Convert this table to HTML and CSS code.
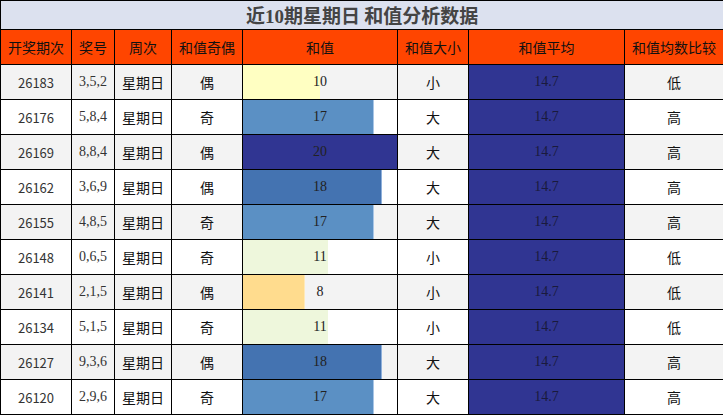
FILE: index.html
```html
<!DOCTYPE html>
<html lang="zh">
<head>
<meta charset="utf-8">
<title>近10期星期日 和值分析数据</title>
<link rel="stylesheet" href="styles.css">
</head>
<body>
<table class="sheet">
  <colgroup>
    <col class="c-issue"><col class="c-num"><col class="c-week"><col class="c-parity">
    <col class="c-sum"><col class="c-size"><col class="c-avg"><col class="c-cmp">
  </colgroup>
  <thead>
    <tr class="title-row"><th colspan="8" class="title">近<span class="digits">10</span>期星期日 和值分析数据</th></tr>
    <tr class="head-row">
      <th>开奖期次</th><th>奖号</th><th>周次</th><th>和值奇偶</th><th>和值</th><th>和值大小</th><th>和值平均</th><th>和值均数比较</th>
    </tr>
  </thead>
  <tbody>
    <tr class="odd"><td class="issue">26183</td><td class="serif">3,5,2</td><td>星期日</td><td>偶</td><td class="sum"><div class="sumbox"><div class="bar c10" style="width:50%"></div><span class="sumnum">10</span></div></td><td>小</td><td class="avg">14.7</td><td>低</td></tr>
    <tr><td class="issue">26176</td><td class="serif">5,8,4</td><td>星期日</td><td>奇</td><td class="sum"><div class="sumbox"><div class="bar c17" style="width:85%"></div><span class="sumnum">17</span></div></td><td>大</td><td class="avg">14.7</td><td>高</td></tr>
    <tr class="odd"><td class="issue">26169</td><td class="serif">8,8,4</td><td>星期日</td><td>偶</td><td class="sum"><div class="sumbox"><div class="bar c20" style="width:100%"></div><span class="sumnum">20</span></div></td><td>大</td><td class="avg">14.7</td><td>高</td></tr>
    <tr><td class="issue">26162</td><td class="serif">3,6,9</td><td>星期日</td><td>偶</td><td class="sum"><div class="sumbox"><div class="bar c18" style="width:90%"></div><span class="sumnum">18</span></div></td><td>大</td><td class="avg">14.7</td><td>高</td></tr>
    <tr class="odd"><td class="issue">26155</td><td class="serif">4,8,5</td><td>星期日</td><td>奇</td><td class="sum"><div class="sumbox"><div class="bar c17" style="width:85%"></div><span class="sumnum">17</span></div></td><td>大</td><td class="avg">14.7</td><td>高</td></tr>
    <tr><td class="issue">26148</td><td class="serif">0,6,5</td><td>星期日</td><td>奇</td><td class="sum"><div class="sumbox"><div class="bar c11" style="width:55%"></div><span class="sumnum">11</span></div></td><td>小</td><td class="avg">14.7</td><td>低</td></tr>
    <tr class="odd"><td class="issue">26141</td><td class="serif">2,1,5</td><td>星期日</td><td>偶</td><td class="sum"><div class="sumbox"><div class="bar c8" style="width:40%"></div><span class="sumnum">8</span></div></td><td>小</td><td class="avg">14.7</td><td>低</td></tr>
    <tr><td class="issue">26134</td><td class="serif">5,1,5</td><td>星期日</td><td>奇</td><td class="sum"><div class="sumbox"><div class="bar c11" style="width:55%"></div><span class="sumnum">11</span></div></td><td>小</td><td class="avg">14.7</td><td>低</td></tr>
    <tr class="odd"><td class="issue">26127</td><td class="serif">9,3,6</td><td>星期日</td><td>偶</td><td class="sum"><div class="sumbox"><div class="bar c18" style="width:90%"></div><span class="sumnum">18</span></div></td><td>大</td><td class="avg">14.7</td><td>高</td></tr>
    <tr><td class="issue">26120</td><td class="serif">2,9,6</td><td>星期日</td><td>奇</td><td class="sum"><div class="sumbox"><div class="bar c17" style="width:85%"></div><span class="sumnum">17</span></div></td><td>大</td><td class="avg">14.7</td><td>高</td></tr>
  </tbody>
</table>
</body>
</html>
```
FILE: styles.css
```css
html, body {
  margin: 0;
  padding: 0;
  background: #ffffff;
}

body {
  font-family: "Noto Sans CJK SC", "Noto Sans", sans-serif;
  font-size: 14px;
  color: #111;
}

.sheet {
  width: 723px;
  border-collapse: collapse;
  table-layout: fixed;
}

.c-issue { width: 71px; }
.c-num { width: 43px; }
.c-week { width: 57px; }
.c-parity { width: 71px; }
.c-sum { width: 155px; }
.c-size { width: 71px; }
.c-avg { width: 156px; }
.c-cmp { width: 99px; }

.sheet th,
.sheet td {
  border: 1px solid #000;
  padding: 0;
  text-align: center;
  vertical-align: middle;
  font-weight: normal;
  line-height: 1;
}

.title-row { height: 29px; }

.title {
  background: #dce1ef;
  color: #444;
  font-size: 19px;
  font-weight: bold !important;
  letter-spacing: 0;
}

.title .digits {
  font-family: "Liberation Serif", serif;
}

.head-row { height: 35px; }

.head-row th {
  background: #ff4500;
  color: #111;
  font-size: 14px;
}

tbody tr {
  height: 35px;
  background: #ffffff;
}

tbody tr.odd {
  background: #f3f3f3;
}

.issue {
  color: #333;
  font-size: 13px;
}

.serif {
  font-family: "Liberation Serif", serif;
  color: #333;
}

.sum {
  height: 34px;
}

.sumbox {
  display: grid;
  height: 34px;
}

.bar,
.sumnum {
  grid-area: 1 / 1;
}

.bar {
  height: 100%;
  box-sizing: border-box;
}

.sumnum {
  align-self: center;
  justify-self: center;
  font-family: "Liberation Serif", serif;
  color: #222;
}

.c8 { background: #ffdc8e; border-right: 1px solid #ffe9b8; }
.c10 { background: #ffffc2; }
.c11 { background: #eef7dc; }
.c17 { background: #5b90c4; border-right: 1px solid #a9c6e6; }
.c18 { background: #4473b1; border-right: 1px solid #8fb0da; }
.c20 { background: #303592; }

.avg {
  background: #303592;
  color: #1a1a3c;
  font-family: "Liberation Serif", serif;
}
```
